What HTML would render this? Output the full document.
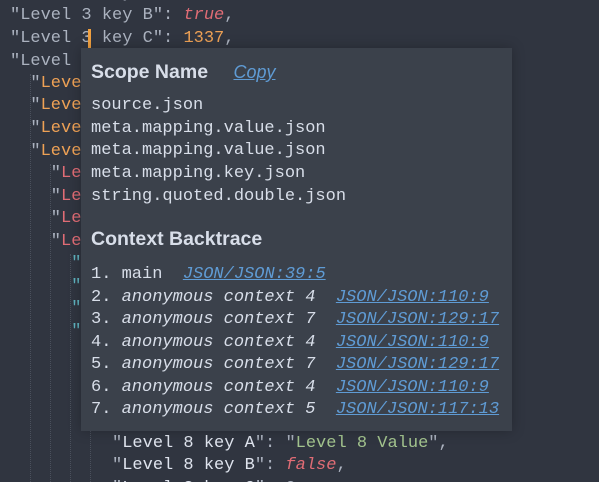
<!DOCTYPE html>
<html><head><meta charset="utf-8"><style>
html,body{margin:0;padding:0;width:599px;height:482px;overflow:hidden;background:#303540;}
.ed{position:absolute;left:0;top:0;width:599px;height:482px;overflow:hidden;font-family:"Liberation Mono",monospace;font-size:17px;}
.l{position:absolute;left:10px;height:22px;line-height:22px;white-space:pre;color:#abb2bf;}
.g{position:absolute;top:0;width:0;border-left:1px dotted #4a505c;}
.o{color:#eea155}.r{color:#e06c75}.t{color:#5fb4c0}.w{color:#dfe4ee}.gr{color:#a3c48e}
.i{font-style:italic}
.pop{position:absolute;left:81px;top:48px;width:431px;height:383px;background:#3b414b;box-shadow:0 0 12px rgba(0,0,0,.25);color:#d8dee9;}
.h{position:absolute;left:10px;font-family:"Liberation Sans",sans-serif;font-weight:bold;font-size:19.5px;color:#d8dee9;}
.m{position:absolute;left:10px;font-family:"Liberation Mono",monospace;font-size:17px;white-space:pre;line-height:22.7px;color:#d8dee9;}
a{color:#5f9bd4;text-decoration:underline;font-style:italic;}
</style></head><body>
<div class="ed">
<div class="g" style="left:30px;top:74px;height:410px"></div>
<div class="g" style="left:50px;top:164px;height:320px"></div>
<div class="g" style="left:70px;top:254px;height:230px"></div>
<div class="g" style="left:90px;top:342px;height:142px"></div>
<div class="l" style="top:-17px">"Level 3 key A": "x",</div>
<div class="l" style="top:5px">"Level 3 key B": <span class="r i">true</span>,</div>
<div class="l" style="top:28px">"Level 3 key C": <span class="o">1337</span>,</div>
<div style="position:absolute;left:88px;top:29px;width:3px;height:20px;background:#f0a040"></div>
<div class="l" style="top:51px">"Level 3 key D": {</div>
<div class="l" style="top:73px">  "<span class="o">Level 4 key A</span>"</div>
<div class="l" style="top:95px">  "<span class="o">Level 4 key B</span>"</div>
<div class="l" style="top:118px">  "<span class="o">Level 4 key C</span>"</div>
<div class="l" style="top:141px">  "<span class="o">Level 4 key D</span>"</div>
<div class="l" style="top:163px">    "<span class="r">Level 5</span>"</div>
<div class="l" style="top:186px">    "<span class="r">Level 5</span>"</div>
<div class="l" style="top:208px">    "<span class="r">Level 5</span>"</div>
<div class="l" style="top:231px">    "<span class="r">Level 5</span>"</div>
<div class="l" style="top:253px">      <span class="t">"Level 6</span></div>
<div class="l" style="top:276px">      <span class="t">"Level 6</span></div>
<div class="l" style="top:298px">      <span class="t">"Level 6</span></div>
<div class="l" style="top:321px">      <span class="t">"Level 6</span></div>
<div class="l" style="top:433px">          "<span class="w">Level 8 key A</span>": "<span class="gr">Level 8 Value</span>",</div>
<div class="l" style="top:455px">          "<span class="w">Level 8 key B</span>": <span class="r i">false</span>,</div>
<div class="l" style="top:478px">          "<span class="w">Level 8 key C</span>": 0</div>
</div>
<div class="pop">
<div class="h" style="top:13px">Scope Name <span style="font-weight:normal;font-style:italic;margin-left:20px;font-size:18px"><a>Copy</a></span></div>
<div class="m" style="top:47px">source.json
meta.mapping.value.json
meta.mapping.value.json
meta.mapping.key.json
string.quoted.double.json</div>
<div class="h" style="top:180px">Context Backtrace</div>
<div class="m" style="top:216px;line-height:22.5px">1. main  <a>JSON/JSON:39:5</a>
2. <i>anonymous context 4</i>  <a>JSON/JSON:110:9</a>
3. <i>anonymous context 7</i>  <a>JSON/JSON:129:17</a>
4. <i>anonymous context 4</i>  <a>JSON/JSON:110:9</a>
5. <i>anonymous context 7</i>  <a>JSON/JSON:129:17</a>
6. <i>anonymous context 4</i>  <a>JSON/JSON:110:9</a>
7. <i>anonymous context 5</i>  <a>JSON/JSON:117:13</a></div>
</div>
</body></html>
